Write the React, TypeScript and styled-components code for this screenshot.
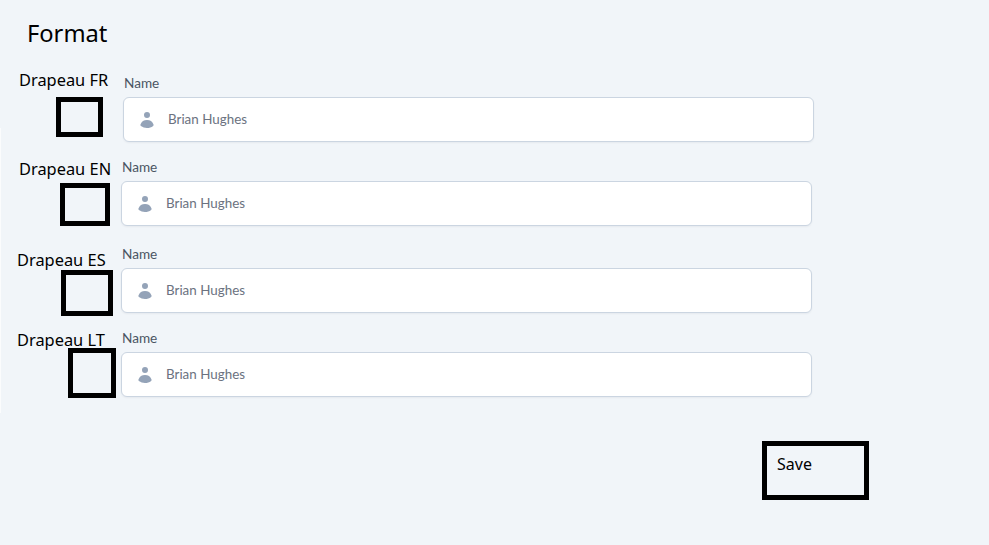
import * as React from 'react';
import styled, { createGlobalStyle } from 'styled-components';

interface flagRowInterface {
  code: string;
  height: number;
  labelTop: number;
  labelLeft: number;
  boxLeft: number;
  boxGap: number;
  boxWidth: number;
  boxHeight: number;
  fieldLeft: number;
  fieldTop: number;
}

const rows: flagRowInterface[] = [
  { code: 'FR', height: 88, labelTop: 0, labelLeft: 19, boxLeft: 56, boxGap: 6, boxWidth: 47, boxHeight: 40, fieldLeft: 123, fieldTop: 4 },
  { code: 'EN', height: 88, labelTop: 1, labelLeft: 19, boxLeft: 60, boxGap: 3, boxWidth: 50, boxHeight: 43, fieldLeft: 121, fieldTop: 0 },
  { code: 'ES', height: 84, labelTop: 4, labelLeft: 17, boxLeft: 61, boxGap: -1, boxWidth: 52, boxHeight: 46, fieldLeft: 121, fieldTop: -1 },
  { code: 'LT', height: 70, labelTop: 0, labelLeft: 17, boxLeft: 68, boxGap: -3, boxWidth: 48, boxHeight: 50, fieldLeft: 121, fieldTop: -1 },
];

const GlobalStyle = createGlobalStyle`
  html, body {
    margin: 0;
    padding: 0;
    background: #f1f5f9;
  }
`;

const Page = styled.div`
  position: relative;
  width: 989px;
  height: 545px;
  overflow: hidden;
  background: #f1f5f9;
  color: #000;
  font-family: "Noto Sans", "Open Sans", sans-serif;

  /* pasted-screenshot edge on the left */
  &::before {
    content: '';
    position: absolute;
    left: 0;
    top: 128px;
    width: 1px;
    height: 285px;
    background: #fbfcfd;
  }
`;

const Title = styled.h1`
  margin: 0;
  padding: 15px 0 0 27px;
  height: 54px;
  box-sizing: border-box;
  font-size: 23.7px;
  line-height: 36px;
  font-weight: 400;
`;

const Rows = styled.div`
  display: flex;
  flex-direction: column;
  margin-top: 15px;
`;

const Row = styled.div<{ $height: number }>`
  display: flex;
  align-items: flex-start;
  height: ${(p) => p.$height}px;
`;

const FlagColumn = styled.div<{ $width: number; $top: number }>`
  flex: none;
  width: ${(p) => p.$width}px;
  padding-top: ${(p) => p.$top}px;
  box-sizing: border-box;
`;

const FlagLabel = styled.div<{ $left: number }>`
  padding-left: ${(p) => p.$left}px;
  font-size: 16.4px;
  line-height: 22px;
  white-space: nowrap;
`;

const FlagBox = styled.div<{ $left: number; $gap: number; $width: number; $height: number }>`
  box-sizing: border-box;
  width: ${(p) => p.$width}px;
  height: ${(p) => p.$height}px;
  margin-left: ${(p) => p.$left}px;
  margin-top: ${(p) => p.$gap}px;
  border: 5px solid #000;
`;

const FieldColumn = styled.div<{ $top: number }>`
  flex: none;
  width: 691px;
  margin-top: ${(p) => p.$top}px;
`;

const FieldLabel = styled.div`
  height: 20px;
  margin-bottom: 4px;
  padding-left: 1px;
  font-family: Lato, "Noto Sans", sans-serif;
  font-size: 13.6px;
  font-weight: 400;
  line-height: 20px;
  color: #4b5563;
`;

const InputBox = styled.div`
  box-sizing: border-box;
  display: flex;
  align-items: center;
  height: 45px;
  padding-left: 13px;
  background: #fff;
  border: 1px solid #cbd5e1;
  border-radius: 6px;
  box-shadow: 0 1px 2px rgba(15, 23, 42, 0.05);
`;

const UserIcon = styled.svg`
  flex: none;
  width: 20px;
  height: 20px;
  margin-right: 11px;
  fill: #94a3b8;
`;

const InputValue = styled.span`
  padding-bottom: 2px;
  font-family: Lato, "Noto Sans", sans-serif;
  font-size: 13.4px;
  color: #6b7280;
`;

const Footer = styled.div`
  display: flex;
  padding-left: 762px;
  margin-top: 42px;
`;

const SaveButton = styled.button`
  box-sizing: border-box;
  width: 107px;
  height: 59px;
  padding: 7px 0 0 10px;
  display: flex;
  align-items: flex-start;
  background: transparent;
  border: 5px solid #000;
  font-family: "Noto Sans", "Open Sans", sans-serif;
  font-size: 16px;
  line-height: 22px;
  color: #000;
`;

const FlagRow = ({
  code,
  height,
  labelTop,
  labelLeft,
  boxLeft,
  boxGap,
  boxWidth,
  boxHeight,
  fieldLeft,
  fieldTop,
}: flagRowInterface) => (
  <Row $height={height}>
    <FlagColumn $width={fieldLeft} $top={labelTop}>
      <FlagLabel $left={labelLeft}>Drapeau {code}</FlagLabel>
      <FlagBox $left={boxLeft} $gap={boxGap} $width={boxWidth} $height={boxHeight} />
    </FlagColumn>
    <FieldColumn $top={fieldTop}>
      <FieldLabel>Name</FieldLabel>
      <InputBox>
        <UserIcon viewBox="0 0 20 20">
          <path d="M10 8a3 3 0 100-6 3 3 0 000 6zM3.465 14.493a1.23 1.23 0 00.41 1.412A9.957 9.957 0 0010 18c2.31 0 4.438-.784 6.131-2.1.43-.333.604-.903.408-1.41a7.002 7.002 0 00-13.074.003z" />
        </UserIcon>
        <InputValue>Brian Hughes</InputValue>
      </InputBox>
    </FieldColumn>
  </Row>
);

export default function App() {
  return (
    <Page>
      <GlobalStyle />
      <Title>Format</Title>
      <Rows>
        {rows.map((row) => (
          <FlagRow key={row.code} {...row} />
        ))}
      </Rows>
      <Footer>
        <SaveButton>Save</SaveButton>
      </Footer>
    </Page>
  );
}
